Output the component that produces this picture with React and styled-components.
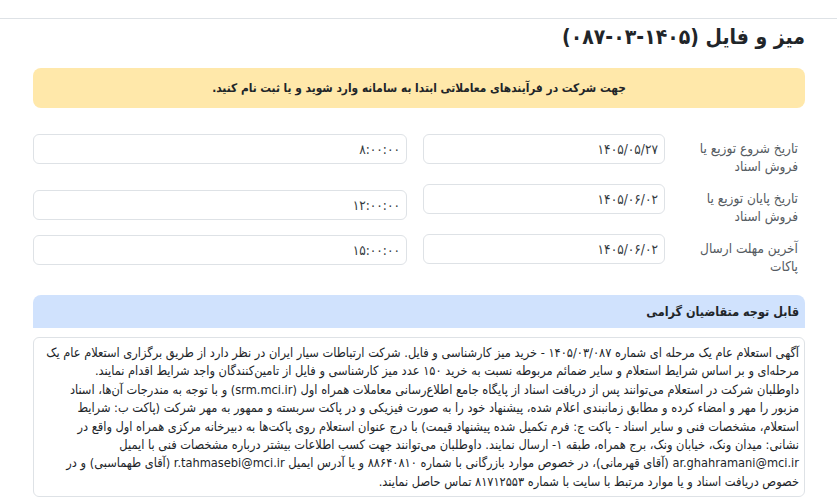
import styled, { createGlobalStyle } from "styled-components";

const GlobalStyle = createGlobalStyle`
  html, body {
    margin: 0;
    padding: 0;
    background: #ffffff;
  }
  body {
    font-family: "DejaVu Sans Condensed", "DejaVu Sans", sans-serif;
    color: #212529;
  }
`;

const rows = [
    {label: "تاریخ شروع توزیع یا فروش اسناد", date: "۱۴۰۵/۰۵/۲۷", time: "۸:۰۰:۰۰", drop: 0},
    {label: "تاریخ پایان توزیع یا فروش اسناد", date: "۱۴۰۵/۰۶/۰۲", time: "۱۲:۰۰:۰۰", drop: 6},
    {label: "آخرین مهلت ارسال پاکات", date: "۱۴۰۵/۰۶/۰۲", time: "۱۵:۰۰:۰۰", drop: 1},
];

const lines = [
    "آگهی استعلام عام یک مرحله ای شماره ۱۴۰۵/۰۳/۰۸۷ - خرید میز کارشناسی و فایل. شرکت ارتباطات سیار ایران در نظر دارد از طریق برگزاری استعلام عام یک",
    "مرحله‌ای و بر اساس شرایط استعلام و سایر ضمائم مربوطه نسبت به خرید ۱۵۰ عدد میز کارشناسی و فایل از تامین‌کنندگان واجد شرایط اقدام نمایند.",
    "داوطلبان شرکت در استعلام می‌توانند پس از دریافت اسناد از پایگاه جامع اطلاع‌رسانی معاملات همراه اول (srm.mci.ir) و با توجه به مندرجات آن‌ها، اسناد",
    "مزبور را مهر و امضاء کرده و مطابق زمانبندی اعلام شده، پیشنهاد خود را به صورت فیزیکی و در پاکت سربسته و ممهور به مهر شرکت (پاکت ب: شرایط",
    "استعلام، مشخصات فنی و سایر اسناد - پاکت ج: فرم تکمیل شده پیشنهاد قیمت) با درج عنوان استعلام روی پاکت‌ها به دبیرخانه مرکزی همراه اول واقع در",
    "نشانی: میدان ونک، خیابان ونک، برج همراه، طبقه ۱- ارسال نمایند. داوطلبان می‌توانند جهت کسب اطلاعات بیشتر درباره مشخصات فنی با ایمیل",
    "ar.ghahramani@mci.ir (آقای قهرمانی)، در خصوص موارد بازرگانی با شماره ۸۸۶۴۰۸۱۰ و یا آدرس ایمیل r.tahmasebi@mci.ir (آقای طهماسبی) و در",
    "خصوص دریافت اسناد و یا موارد مرتبط با سایت با شماره ۸۱۷۱۲۵۵۳ تماس حاصل نمایند.",
];

const App = () => {
    return (
        <>
            <GlobalStyle/>
            <Page dir="rtl">
                <Title>میز و فایل (۱۴۰۵-۰۳-۰۸۷)</Title>
                <Alert>جهت شرکت در فرآیندهای معاملاتی ابتدا به سامانه وارد شوید و یا ثبت نام کنید.</Alert>
                <Form>
                    {rows.map((row) => (
                        <Row key={row.label}>
                            <Label>{row.label}</Label>
                            <Field>{row.date}</Field>
                            <Field $drop={row.drop}>{row.time}</Field>
                        </Row>
                    ))}
                </Form>
                <Card>
                    <CardHeader>قابل توجه متقاضیان گرامی</CardHeader>
                    <Notice>
                        {lines.map((line, i) => (
                            <Line key={i}>{line}</Line>
                        ))}
                    </Notice>
                </Card>
            </Page>
        </>
    );
};

const Page = styled.div`
  margin-top: 18px;
  border-top: 1px solid #dee2e6;
  padding: 0 32px 0 33px;
  direction: rtl;
`;

const Title = styled.h1`
  margin: 0;
  padding-top: 4px;
  height: 45px;
  font-size: 21px;
  font-weight: bold;
  line-height: 28px;
  color: #212529;
`;

const Alert = styled.div`
  height: 40px;
  display: flex;
  align-items: center;
  justify-content: center;
  background: #ffe8aa;
  border-radius: 8px;
  font-size: 11.8px;
  font-weight: bold;
  color: #212529;
`;

const Form = styled.div`
  margin-top: 26px;
  display: flex;
  flex-direction: column;
  gap: 10px;
`;

const Row = styled.div`
  display: grid;
  grid-template-columns: 124px 242px 1fr;
  column-gap: 16px;
  align-items: start;
`;

const Label = styled.div`
  padding-top: 5px;
  padding-right: 7px;
  height: 35px;
  font-size: 13.5px;
  line-height: 18px;
  color: #555b61;
`;

const Field = styled.div`
  margin-top: ${(p) => p.$drop || 0}px;
  height: 30px;
  box-sizing: border-box;
  border: 1px solid #dee2e6;
  border-radius: 6px;
  padding: 0 6px;
  display: flex;
  align-items: center;
  font-size: 13.5px;
  color: #333a40;
  background: #fff;
`;

const Card = styled.div`
  margin-top: 21px;
`;

const CardHeader = styled.div`
  height: 33px;
  display: flex;
  align-items: center;
  padding-right: 6px;
  background: #d0e2fd;
  border-radius: 8px 8px 0 0;
  font-size: 12.5px;
  font-weight: bold;
  color: #212529;
`;

const Notice = styled.div`
  margin-top: 9px;
  height: 160px;
  box-sizing: border-box;
  border: 1px solid #dee2e6;
  border-radius: 6px;
  padding: 6px 5px 0;
  font-size: 12.7px;
  line-height: 18.4px;
  color: #212529;
  overflow: hidden;
`;

const Line = styled.div`
  white-space: nowrap;
`;

export default App;
